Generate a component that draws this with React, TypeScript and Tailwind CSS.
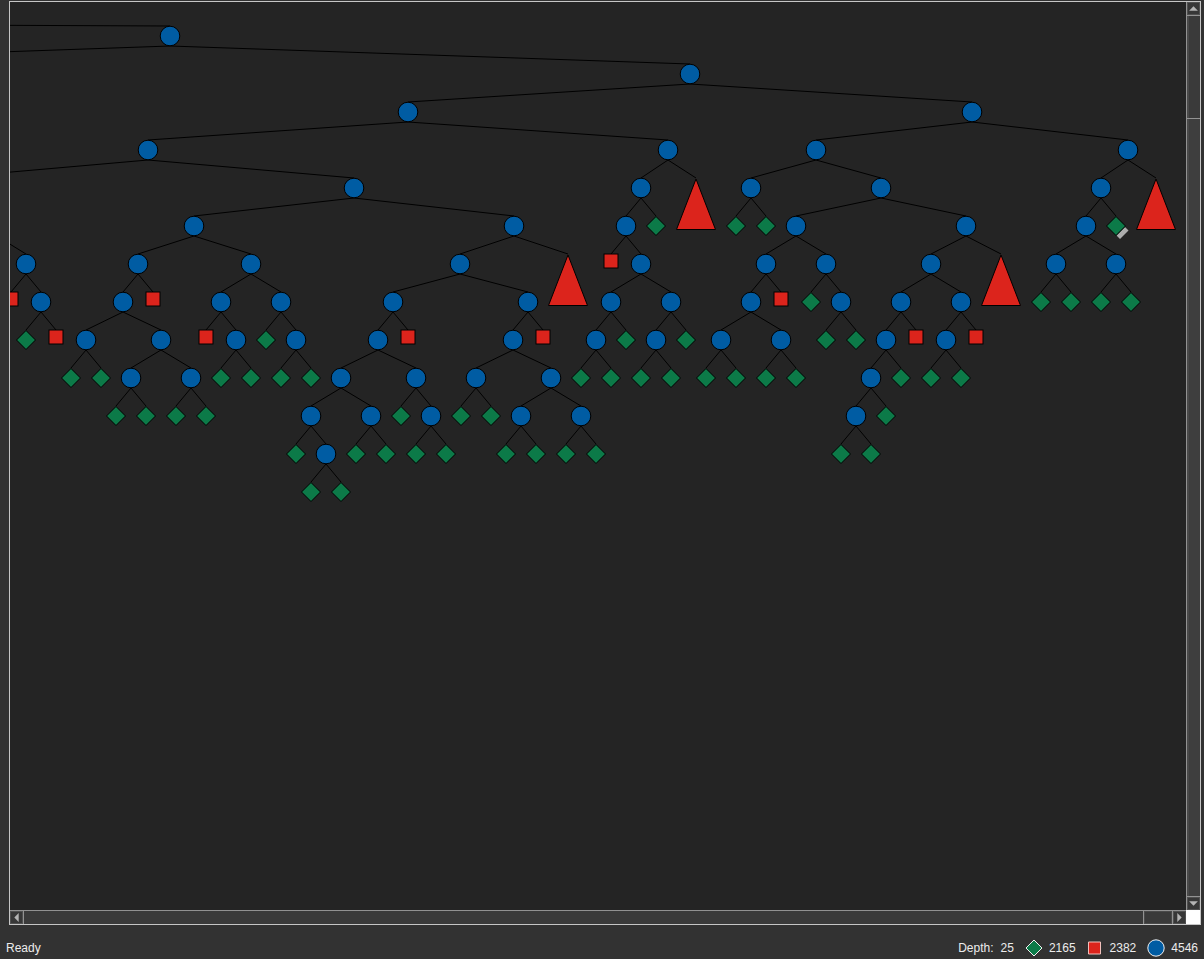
import React from "react";

type Kind = "branch" | "solved" | "failed" | "subtree" | "marked";
type TreeNode = { x: number; kind: Kind; children: TreeNode[] };

const b = (x: number, ...children: TreeNode[]): TreeNode => ({ x, kind: "branch", children });
const s = (x: number): TreeNode => ({ x, kind: "solved", children: [] });
const f = (x: number): TreeNode => ({ x, kind: "failed", children: [] });
const t = (x: number): TreeNode => ({ x, kind: "subtree", children: [] });
const m = (x: number): TreeNode => ({ x, kind: "marked", children: [] });

const ROW = 38;

const root = b(170,
  b(690,
    b(408,
      b(148,
        b(354,
          b(194,
            b(138, b(123, b(86, s(71), s(101)), b(161, b(131, s(116), s(146)), b(191, s(176), s(206)))), f(153)),
            b(251, b(221, f(206), b(236, s(221), s(251))), b(281, s(266), b(296, s(281), s(311)))),
          ),
          b(514,
            b(460,
              b(393,
                b(378,
                  b(341, b(311, s(296), b(326, s(311), s(341))), b(371, s(356), s(386))),
                  b(416, s(401), b(431, s(416), s(446))),
                ),
                f(408),
              ),
              b(528,
                b(513, b(476, s(461), s(491)), b(551, b(521, s(506), s(536)), b(581, s(566), s(596)))),
                f(543),
              ),
            ),
            t(568),
          ),
        ),
      ),
      b(668,
        b(641,
          b(626, f(611), b(641, b(611, b(596, s(581), s(611)), s(626)), b(671, b(656, s(641), s(671)), s(686)))),
          s(656),
        ),
        t(696),
      ),
    ),
    b(972,
      b(816,
        b(751, s(736), s(766)),
        b(881,
          b(796,
            b(766, b(751, b(721, s(706), s(736)), b(781, s(766), s(796))), f(781)),
            b(826, s(811), b(841, s(826), s(856))),
          ),
          b(966,
            b(931,
              b(901, b(886, b(871, b(856, s(841), s(871)), s(886)), s(901)), f(916)),
              b(961, b(946, s(931), s(961)), f(976)),
            ),
            t(1001),
          ),
        ),
      ),
      b(1128,
        b(1101, b(1086, b(1056, s(1041), s(1071)), b(1116, s(1101), s(1131))), m(1116)),
        t(1156),
      ),
    ),
  ),
);

const leftBranch = b(26, f(11), b(41, s(26), f(56)));

function Shape({ kind, x, y }: { kind: Kind; x: number; y: number }) {
  if (kind === "branch") return <circle cx={x} cy={y} r="9.8" fill="#005ca3" />;
  if (kind === "failed") return <rect x={x - 7} y={y - 10} width="14" height="14" fill="#dc241c" />;
  if (kind === "subtree") return <path d={`M${x} ${y - 9}L${x + 19.5} ${y + 41.5}H${x - 19.5}Z`} fill="#dc241c" />;
  return (
    <>
      {kind === "marked" && <path d={`M${x + 9} ${y + 1}l3.5 3.5-8.5 8.5-3.5-3.5Z`} fill="#adadad" stroke="none" />}
      <path d={`M${x} ${y - 9.5}l9.5 9.5-9.5 9.5-9.5-9.5Z`} fill="#0c7a48" />
    </>
  );
}

function Branch({ node, y }: { node: TreeNode; y: number }) {
  return (
    <>
      {node.children.map((child) => (
        <React.Fragment key={child.x}>
          <line x1={node.x} y1={y + 10} x2={child.x} y2={y + ROW - 10} />
          <Branch node={child} y={y + ROW} />
        </React.Fragment>
      ))}
      <Shape kind={node.kind} x={node.x} y={y} />
    </>
  );
}

const arrows = {
  up: "M1 7 L5 3 L9 7Z",
  down: "M1 3 L5 7 L9 3Z",
  left: "M7 1 L3 5 L7 9Z",
  right: "M3 1 L7 5 L3 9Z",
};

function ArrowButton({ direction }: { direction: keyof typeof arrows }) {
  return (
    <button
      type="button"
      aria-label={`Scroll ${direction}`}
      className="flex size-[13px] shrink-0 items-center justify-center border border-[#505050] bg-[#373737]"
    >
      <svg viewBox="0 0 10 10" className="size-[11px] shrink-0" fill="#b4b4b4">
        <path d={arrows[direction]} />
      </svg>
    </button>
  );
}

export default function App() {
  return (
    <div className="flex h-screen flex-col bg-[#323232] font-['Liberation_Sans',Arial,sans-serif] text-xs text-[#ececec]">
      <main className="flex min-h-0 flex-1 pt-px pr-[3px] pl-[9px]">
        <div className="grid min-w-0 flex-1 grid-cols-[minmax(0,1fr)_14px] grid-rows-[minmax(0,1fr)_14px] border border-[#c6c6c6] bg-[#242424]">
          <div className="min-h-0 overflow-hidden">
            <svg
              className="block size-full"
              role="img"
              aria-label="Search tree"
              stroke="#000000"
              strokeWidth="1"
            >
              <g transform="translate(-10 -2)">
                <line x1="0" y1="25.3" x2="170" y2="26" />
                <line x1="170" y1="46" x2="0" y2="52" />
                <line x1="148" y1="160" x2="0" y2="173" />
                <line x1="26" y1="254" x2="0" y2="238" />
                <Branch node={root} y={36} />
                <Branch node={leftBranch} y={264} />
              </g>
            </svg>
          </div>
          <div className="flex flex-col gap-px border-l border-[#929292] bg-[#929292]">
            <ArrowButton direction="up" />
            <div className="h-[102px] border-l-2 border-l-[#4a4a4a] bg-[#3a3a3a]" />
            <div className="flex-1 border-l-2 border-l-[#4a4a4a] bg-[#3e3e3e]" />
            <ArrowButton direction="down" />
          </div>
          <div className="flex gap-px border-t border-[#929292] bg-[#929292]">
            <ArrowButton direction="left" />
            <div className="flex-1 bg-[#3a3a3a]" />
            <div className="w-7 border border-[#4a4a4a] bg-[#3a3a3a]" />
            <ArrowButton direction="right" />
          </div>
          <div className="bg-white" />
        </div>
      </main>
      <footer className="flex h-[34px] shrink-0 items-center justify-between px-1.5 pt-3">
        <span>Ready</span>
        <div className="flex items-center gap-[11px]">
          <span className="flex gap-[7px]">
            <span>Depth:</span>
            <span>25</span>
          </span>
          <span className="flex items-center gap-1.5">
            <svg className="h-[18px] w-[18px]" viewBox="0 0 18 18" role="img" aria-label="Solutions">
              <path d="M9 1 17 9l-8 8L1 9Z" fill="#0c7a48" stroke="#f0f0f0" />
            </svg>
            2165
          </span>
          <span className="flex items-center gap-2">
            <svg className="size-[15px]" viewBox="0 0 15 15" role="img" aria-label="Failures">
              <path d="M1.5 1h12v12h-12Z" fill="#dc241c" stroke="#f0c0bc" />
            </svg>
            2382
          </span>
          <span className="flex items-center gap-1.5">
            <svg className="size-[18px]" viewBox="0 0 18 18" role="img" aria-label="Choices">
              <circle cx="9" cy="9" r="8.2" fill="#005ca3" stroke="#f0f0f0" />
            </svg>
            4546
          </span>
        </div>
      </footer>
    </div>
  );
}
